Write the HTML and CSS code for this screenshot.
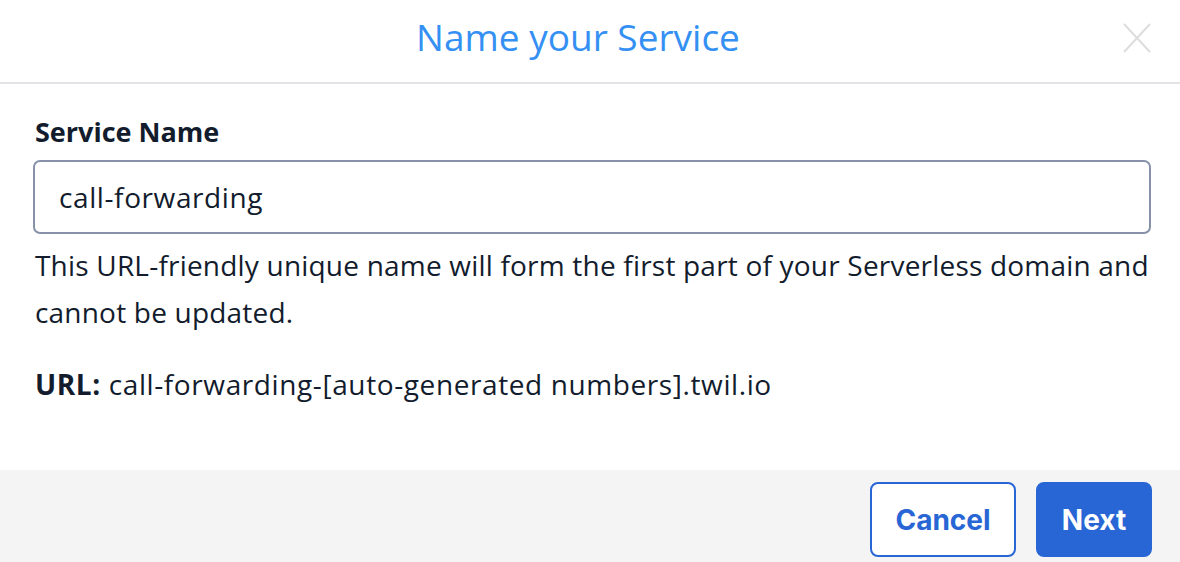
FILE: index.html
```html
<!DOCTYPE html>
<html lang="en">
<head>
  <meta charset="UTF-8">
  <title>Name your Service</title>
  <link rel="stylesheet" href="styles.css">
</head>
<body>
  <div class="modal">
    <div class="modal-header">
      <h1>Name your Service</h1>
      <button class="close-btn" aria-label="Close">
        <svg width="28" height="30" viewBox="0 0 28 30">
          <path d="M1 1 L27 29 M27 1 L1 29" stroke="#dddddd" stroke-width="2" fill="none"/>
        </svg>
      </button>
    </div>
    <div class="modal-body">
      <label for="serviceName">Service Name</label>
      <input type="text" id="serviceName" value="call-forwarding">
      <p class="help-text">This URL-friendly unique name will form the first part of your Serverless domain and cannot be updated.</p>
      <p class="url-line"><strong>URL:</strong> call-forwarding-[auto-generated numbers].twil.io</p>
    </div>
    <div class="modal-footer">
      <button class="btn btn-secondary">Cancel</button>
      <button class="btn btn-primary">Next</button>
    </div>
  </div>
</body>
</html>
```

FILE: styles.css
```css
body {
  margin: 0;
  font-family: 'Open Sans', 'Noto Sans', sans-serif;
  background: #ffffff;
  color: #121c2d;
}
.modal {
  width: 1180px;
  height: 562px;
  display: flex;
  flex-direction: column;
  overflow: hidden;
}
.modal-header {
  position: relative;
  height: 84px;
  border-bottom: 2px solid #e1e3e6;
  display: flex;
  align-items: center;
  justify-content: center;
  padding: 0 24px 10px 0;
  box-sizing: border-box;
  flex-shrink: 0;
}
.modal-header h1 {
  margin: 0;
  font-size: 37px;
  font-weight: 400;
  color: #3590f3;
}
.close-btn {
  position: absolute;
  right: 29px;
  top: 23px;
  padding: 0;
  border: none;
  background: none;
  cursor: pointer;
  line-height: 0;
}
.modal-body {
  padding: 30px 29px 0 33px;
  flex: 1;
}
label {
  display: block;
  font-size: 27px;
  font-weight: 700;
  line-height: 36px;
  margin: 0 0 10px 2px;
}
input[type="text"] {
  width: 100%;
  height: 74px;
  box-sizing: border-box;
  padding: 0 24px;
  font-family: 'Open Sans', 'Noto Sans', sans-serif;
  font-size: 28px;
  letter-spacing: 0.6px;
  color: #121c2d;
  border: 2px solid #8891aa;
  border-radius: 7px;
  outline: none;
}
.help-text {
  margin: 8px -10px 0 2px;
  font-size: 28px;
  letter-spacing: 0.2px;
  line-height: 47px;
}
.url-line {
  margin: 30px 0 0 2px;
  font-size: 28px;
  letter-spacing: 0.6px;
  line-height: 36px;
}
.modal-footer {
  height: 92px;
  background: #f4f4f4;
  display: flex;
  justify-content: flex-end;
  align-items: flex-start;
  gap: 20px;
  padding: 12px 28px 0 0;
  box-sizing: border-box;
  flex-shrink: 0;
}
.btn {
  height: 75px;
  font-family: 'Inter', 'Liberation Sans', sans-serif;
  font-size: 28px;
  font-weight: 700;
  border-radius: 8px;
  cursor: pointer;
}
.btn-secondary {
  width: 146px;
  background: #ffffff;
  color: #2866d6;
  border: 2px solid #2866d6;
}
.btn-primary {
  width: 116px;
  background: #2866d6;
  color: #ffffff;
  border: 2px solid #2866d6;
}
```
